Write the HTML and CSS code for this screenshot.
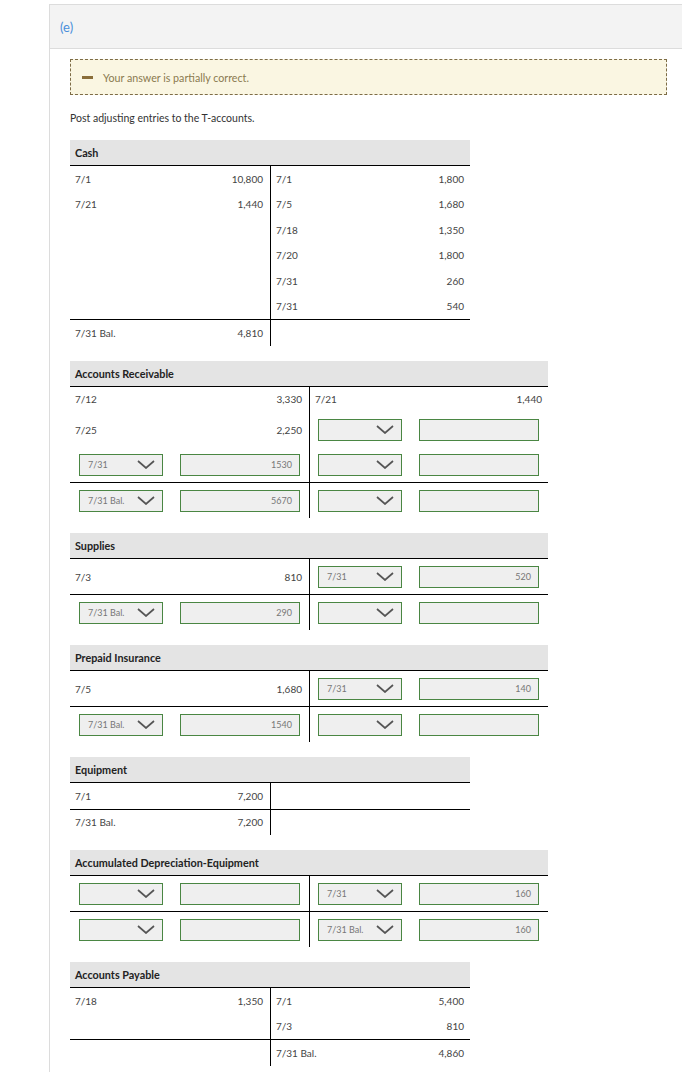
FILE: index.html
```html
<!DOCTYPE html>
<html>
<head>
<meta charset="utf-8">
<link rel="stylesheet" href="styles.css">
</head>
<body>
<div class="card">
  <div class="card-head"><span class="part">(e)</span></div>
  <div class="card-body">
    <div class="notice"><span class="dash"></span><span>Your answer is partially correct.</span></div>
    <p class="intro">Post adjusting entries to the T-accounts.</p>

    <!-- Cash -->
    <div class="t">
      <div class="t-head">Cash</div>
      <div class="tr"><div class="tc"><span>7/1</span><span>10,800</span></div><div class="tc"><span>7/1</span><span>1,800</span></div></div>
      <div class="tr"><div class="tc"><span>7/21</span><span>1,440</span></div><div class="tc"><span>7/5</span><span>1,680</span></div></div>
      <div class="tr"><div class="tc"></div><div class="tc"><span>7/18</span><span>1,350</span></div></div>
      <div class="tr"><div class="tc"></div><div class="tc"><span>7/20</span><span>1,800</span></div></div>
      <div class="tr"><div class="tc"></div><div class="tc"><span>7/31</span><span>260</span></div></div>
      <div class="tr"><div class="tc"></div><div class="tc"><span>7/31</span><span>540</span></div></div>
      <div class="tr bal"><div class="tc"><span>7/31 Bal.</span><span>4,810</span></div><div class="tc"></div></div>
    </div>

    <!-- Accounts Receivable -->
    <div class="t wide">
      <div class="t-head">Accounts Receivable</div>
      <div class="tr"><div class="tc"><span>7/12</span><span>3,330</span></div><div class="tc"><span>7/21</span><span>1,440</span></div></div>
      <div class="tr in"><div class="tc"><span>7/25</span><span>2,250</span></div><div class="tc f"><div class="sel"><span></span><svg class="chev" viewBox="0 0 18 9"><polyline points="1,1 9,8 17,1"/></svg></div><div class="inp"></div></div></div>
      <div class="tr in"><div class="tc f"><div class="sel"><span>7/31</span><svg class="chev" viewBox="0 0 18 9"><polyline points="1,1 9,8 17,1"/></svg></div><div class="inp">1530</div></div><div class="tc f"><div class="sel"><span></span><svg class="chev" viewBox="0 0 18 9"><polyline points="1,1 9,8 17,1"/></svg></div><div class="inp"></div></div></div>
      <div class="tr in bal"><div class="tc f"><div class="sel"><span>7/31 Bal.</span><svg class="chev" viewBox="0 0 18 9"><polyline points="1,1 9,8 17,1"/></svg></div><div class="inp">5670</div></div><div class="tc f"><div class="sel"><span></span><svg class="chev" viewBox="0 0 18 9"><polyline points="1,1 9,8 17,1"/></svg></div><div class="inp"></div></div></div>
    </div>

    <!-- Supplies -->
    <div class="t wide">
      <div class="t-head">Supplies</div>
      <div class="tr in"><div class="tc"><span>7/3</span><span>810</span></div><div class="tc f"><div class="sel"><span>7/31</span><svg class="chev" viewBox="0 0 18 9"><polyline points="1,1 9,8 17,1"/></svg></div><div class="inp">520</div></div></div>
      <div class="tr in bal"><div class="tc f"><div class="sel"><span>7/31 Bal.</span><svg class="chev" viewBox="0 0 18 9"><polyline points="1,1 9,8 17,1"/></svg></div><div class="inp">290</div></div><div class="tc f"><div class="sel"><span></span><svg class="chev" viewBox="0 0 18 9"><polyline points="1,1 9,8 17,1"/></svg></div><div class="inp"></div></div></div>
    </div>

    <!-- Prepaid Insurance -->
    <div class="t wide">
      <div class="t-head">Prepaid Insurance</div>
      <div class="tr in"><div class="tc"><span>7/5</span><span>1,680</span></div><div class="tc f"><div class="sel"><span>7/31</span><svg class="chev" viewBox="0 0 18 9"><polyline points="1,1 9,8 17,1"/></svg></div><div class="inp">140</div></div></div>
      <div class="tr in bal"><div class="tc f"><div class="sel"><span>7/31 Bal.</span><svg class="chev" viewBox="0 0 18 9"><polyline points="1,1 9,8 17,1"/></svg></div><div class="inp">1540</div></div><div class="tc f"><div class="sel"><span></span><svg class="chev" viewBox="0 0 18 9"><polyline points="1,1 9,8 17,1"/></svg></div><div class="inp"></div></div></div>
    </div>

    <!-- Equipment -->
    <div class="t">
      <div class="t-head">Equipment</div>
      <div class="tr"><div class="tc"><span>7/1</span><span>7,200</span></div><div class="tc"></div></div>
      <div class="tr bal"><div class="tc"><span>7/31 Bal.</span><span>7,200</span></div><div class="tc"></div></div>
    </div>

    <!-- Accumulated Depreciation-Equipment -->
    <div class="t wide">
      <div class="t-head">Accumulated Depreciation-Equipment</div>
      <div class="tr in"><div class="tc f"><div class="sel"><span></span><svg class="chev" viewBox="0 0 18 9"><polyline points="1,1 9,8 17,1"/></svg></div><div class="inp"></div></div><div class="tc f"><div class="sel"><span>7/31</span><svg class="chev" viewBox="0 0 18 9"><polyline points="1,1 9,8 17,1"/></svg></div><div class="inp">160</div></div></div>
      <div class="tr in bal"><div class="tc f"><div class="sel"><span></span><svg class="chev" viewBox="0 0 18 9"><polyline points="1,1 9,8 17,1"/></svg></div><div class="inp"></div></div><div class="tc f"><div class="sel"><span>7/31 Bal.</span><svg class="chev" viewBox="0 0 18 9"><polyline points="1,1 9,8 17,1"/></svg></div><div class="inp">160</div></div></div>
    </div>

    <!-- Accounts Payable -->
    <div class="t">
      <div class="t-head">Accounts Payable</div>
      <div class="tr"><div class="tc"><span>7/18</span><span>1,350</span></div><div class="tc"><span>7/1</span><span>5,400</span></div></div>
      <div class="tr"><div class="tc"></div><div class="tc"><span>7/3</span><span>810</span></div></div>
      <div class="tr bal"><div class="tc"></div><div class="tc"><span>7/31 Bal.</span><span>4,860</span></div></div>
    </div>
  </div>
</div>
</body>
</html>
```

FILE: styles.css
```css
* { box-sizing: border-box; }
html, body { margin: 0; padding: 0; background: #fff; }
body {
  font-family: Lato, "Open Sans", "Liberation Sans", sans-serif;
  font-size: 10px;
  color: #333;
}
.card {
  margin: 4px 0 0 49px;
  border-left: 1px solid #dcdcdc;
  border-top: 1px solid #dcdcdc;
  min-height: 1100px;
}
.card-head {
  height: 44px;
  background: #f3f3f3;
  border-bottom: 1px solid #dcdcdc;
  display: flex;
  align-items: center;
  padding-left: 10px;
}
.part { color: #4a8fdb; font-size: 13px; }
.card-body { padding: 10px 15px 0 20px; }
.notice {
  height: 36px;
  border: 1px dashed #7d6c46;
  background: #faf6e2;
  display: flex;
  align-items: center;
  padding-left: 11px;
  color: #8a7a50;
  font-size: 10.7px;
}
.dash {
  width: 11px;
  height: 3px;
  background: #8a6e3a;
  margin-right: 10px;
}
.intro {
  margin: 16px 0 15px 0;
  font-size: 10.5px;
  line-height: 14px;
  color: #333;
}
.t { width: 400px; margin-bottom: 15px; color: #444; }
.t.wide { width: 478px; }
.t-head {
  height: 26px;
  background: #e4e4e4;
  border-bottom: 1px solid #000;
  display: flex;
  align-items: center;
  padding-left: 5px;
  font-weight: 700;
  font-size: 10.8px;
  color: #222;
}
.tr {
  display: grid;
  grid-template-columns: 201px 199px;
  height: 25.5px;
}
.t.wide .tr { grid-template-columns: 240px 238px; }
.tr.in { height: 35px; }
.tr.bal { border-top: 1px solid #000; height: 26.5px; }
.tr.in.bal { height: 36px; }
.tc {
  display: flex;
  align-items: center;
  justify-content: space-between;
  padding: 0 6px 0 5px;
}
.tc:first-child { border-right: 1px solid #000; padding-right: 7px; }
.tc.f { padding: 0 9px 0 8px; }
.tc.f:first-child { padding: 0 9px 0 9px; }
.sel {
  width: 84px;
  height: 22px;
  border: 1px solid #4a8643;
  background: #efefef;
  display: flex;
  align-items: center;
  justify-content: space-between;
  padding: 0 7px 0 8px;
  font-size: 9px;
  color: #777;
}
.chev {
  width: 18px;
  height: 9px;
  fill: none;
  stroke: #555;
  stroke-width: 1.7;
}
.inp {
  width: 120px;
  height: 22px;
  border: 1px solid #4a8643;
  background: #efefef;
  display: flex;
  align-items: center;
  justify-content: flex-end;
  padding-right: 7px;
  font-size: 9px;
  color: #777;
}
```
